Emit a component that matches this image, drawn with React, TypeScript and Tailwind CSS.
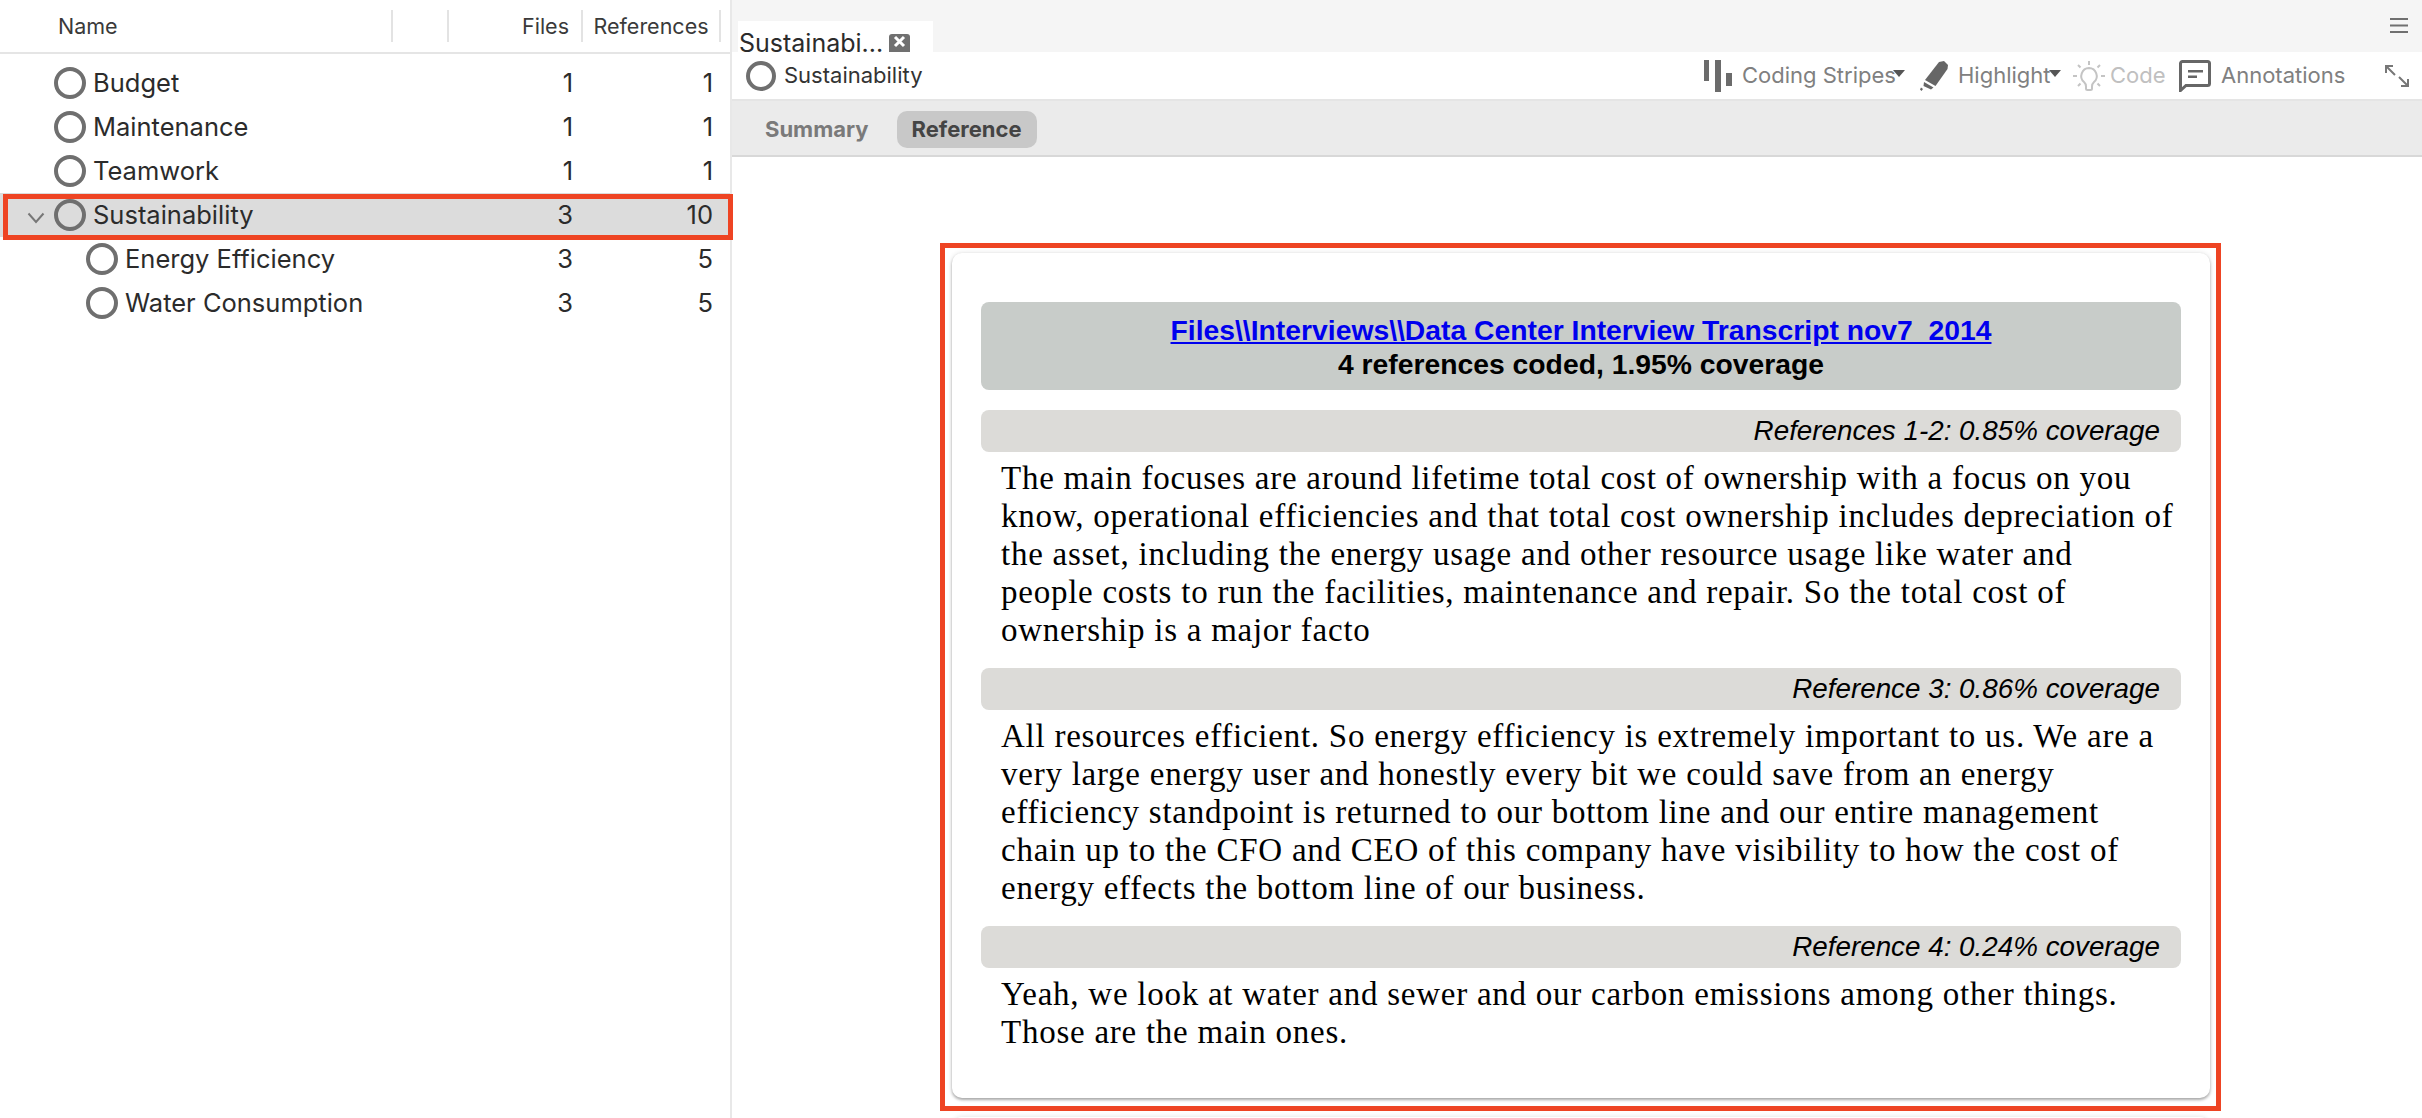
const ui = { fontFamily: "Inter, sans-serif" };

const rows = [
  { name: "Budget", files: 1, refs: 1, depth: 0 },
  { name: "Maintenance", files: 1, refs: 1, depth: 0 },
  { name: "Teamwork", files: 1, refs: 1, depth: 0 },
  { name: "Sustainability", files: 3, refs: 10, depth: 0, selected: true },
  { name: "Energy Efficiency", files: 3, refs: 5, depth: 1 },
  { name: "Water Consumption", files: 3, refs: 5, depth: 1 },
];

const sections = [
  {
    label: "References 1-2: 0.85% coverage",
    lines: [
      "The main focuses are around lifetime total cost of ownership with a focus on you",
      "know, operational efficiencies and that total cost ownership includes depreciation of",
      "the asset, including the energy usage and other resource usage like water and",
      "people costs to run the facilities, maintenance and repair. So the total cost of",
      "ownership is a major facto",
    ],
  },
  {
    label: "Reference 3: 0.86% coverage",
    lines: [
      "All resources efficient. So energy efficiency is extremely important to us. We are a",
      "very large energy user and honestly every bit we could save from an energy",
      "efficiency standpoint is returned to our bottom line and our entire management",
      "chain up to the CFO and CEO of this company have visibility to how the cost of",
      "energy effects the bottom line of our business.",
    ],
  },
  {
    label: "Reference 4: 0.24% coverage",
    lines: [
      "Yeah, we look at water and sewer and our carbon emissions among other things.",
      "Those are the main ones.",
    ],
  },
];

function Circle({ className }: { className?: string }) {
  return <span className={"block h-[32px] w-[32px] shrink-0 rounded-full border-[4px] border-[#6f6f6f] " + (className ?? "")} />;
}

function TreeRow({ row }: { row: (typeof rows)[number] }) {
  return (
    <div className={"relative flex h-[44px] items-center " + (row.selected ? "bg-[#dcdcdc]" : "")}>
      {row.selected && (
        <>
          {/* annotation box drawn over the row */}
          <div className="absolute left-[3px] top-[1px] h-[46px] w-[730px] border-[5px] border-[#ee4423]" />
          <svg className="absolute left-[27px] top-[19px]" width="18" height="12" viewBox="0 0 18 12">
            <path d="M1.5 1.5 9 10l7.5-8.5" fill="none" stroke="#777" strokeWidth="2" />
          </svg>
        </>
      )}
      <Circle className={row.depth ? "ml-[86px]" : "ml-[54px]"} />
      <span className="ml-[7px] flex-1 text-[25.5px] text-[#2b2b2b]">{row.name}</span>
      <span className="w-[60px] text-right text-[25.5px] text-[#2b2b2b]">{row.files}</span>
      <span className="ml-[80px] mr-[17px] w-[60px] text-right text-[25.5px] text-[#2b2b2b]">{row.refs}</span>
    </div>
  );
}

function Toolbar() {
  return (
    <div className="flex h-[47px] shrink-0 items-center bg-white pl-[14px] text-[22px] text-[#808080]">
      <Circle className="!h-[30px] !w-[30px]" />
      <span className="ml-[8px] flex-1 text-[#333]">Sustainability</span>

      <svg width="28" height="32" viewBox="0 0 28 32" className="mr-[10px]">
        <rect x="0" y="0" width="5" height="21" fill="#6b6b6b" />
        <rect x="11" y="0" width="6" height="32" fill="#6b6b6b" />
        <rect x="22" y="13" width="6" height="13" fill="#6b6b6b" />
      </svg>
      <span className="relative w-[164px] whitespace-nowrap">
        Coding Stripes
        <svg className="absolute left-[151px] top-[11px]" width="12" height="7" viewBox="0 0 12 7">
          <path d="M0 0h12L6 7z" fill="#555" />
        </svg>
      </span>

      <svg width="28" height="30" viewBox="0 0 28 30" className="ml-[14px] mr-[10px]">
        <path d="M24 0 28 4 27.500 8 15.500 25 5 19 19 1z" fill="#666" />
        <path d="M4 21 13.500 26.500 11 28.500 3.500 25z" fill="#666" />
        <path d="M1 26.500 3 28 1.500 30 0 28.500z" fill="#666" />
      </svg>
      <span className="relative w-[93px]">
        Highlight
        <svg className="absolute left-[91px] top-[11px]" width="12" height="7" viewBox="0 0 12 7">
          <path d="M0 0h12L6 7z" fill="#555" />
        </svg>
      </span>

      <svg width="32" height="30" viewBox="0 0 32 30" className="ml-[22px] mr-[5px]" fill="none" stroke="#c4c4c4" strokeWidth="2">
        <path d="M16 7a8 8 0 0 0-5 14c1.500 1.300 2 2.500 2 4.500v2a1.500 1.500 0 0 0 1.500 1.500h3a1.500 1.500 0 0 0 1.500-1.500v-2c0-2 .5-3.200 2-4.500a8 8 0 0 0-5-14z" />
        <path d="M16 0v4M5 4l2.500 2.500M27 4l-2.500 2.500M0 15h4M28 15h4M5 25l2.500-2.500M27 25l-2.500-2.500" />
      </svg>
      <span className="w-[53px] text-[#c0c0c0]">Code</span>

      <svg width="32" height="32" viewBox="0 0 32 32" className="ml-[16px] mr-[10px]">
        <path d="M3.500 1.500h25a2 2 0 0 1 2 2v20a2 2 0 0 1-2 2H7l-5.500 5V3.500a2 2 0 0 1 2-2z" fill="none" stroke="#666" strokeWidth="3" />
        <rect x="9" y="10" width="15" height="2.500" fill="#666" />
        <rect x="9" y="15.500" width="9" height="2.500" fill="#666" />
      </svg>
      <span className="w-[125px] whitespace-nowrap">Annotations</span>

      <svg width="24" height="22" viewBox="0 0 24 22" className="ml-[39px] mr-[13px]" fill="none" stroke="#777" strokeWidth="2">
        <path d="M1 8V1h7M1 1l9 9M23 14v7h-7M23 21l-9-9" />
      </svg>
    </div>
  );
}

export default function App() {
  return (
    <div className="flex h-[1118px] w-[2422px] overflow-hidden bg-white" style={ui}>
      {/* code tree */}
      <div className="w-[732px] shrink-0 border-r-2 border-[#e8e8e8]">
        <div className="flex h-[54px] items-center border-b-2 border-[#e5e5e5] text-[21.5px] text-[#3a3a3a]">
          <span className="ml-[58px] w-[333px]">Name</span>
          <span className="h-[32px] w-[56px] border-l-2 border-[#e3e3e3]" />
          <span className="flex h-[32px] w-[134px] items-center justify-end border-l-2 border-[#e3e3e3] pr-[12px]">Files</span>
          <span className="flex h-[32px] w-[140px] items-center justify-center whitespace-nowrap border-x-2 border-[#e3e3e3]">References</span>
        </div>
        <div className="pt-[7px]">
          {rows.map((r) => (
            <TreeRow key={r.name} row={r} />
          ))}
        </div>
      </div>

      {/* detail view */}
      <div className="flex min-w-0 flex-1 flex-col">
        <div className="flex h-[52px] shrink-0 items-end justify-between bg-[#f5f5f5] pl-[6px]">
          <div className="flex h-[31px] w-[195px] items-start bg-white pt-[13px] text-[25px] leading-[18px] text-[#2b2b2b]">
            <span className="ml-[1px]">Sustainabi...</span>
            <span className="ml-[6px] flex h-[18px] w-[21px] items-start justify-center rounded-t-[3px] bg-[#707070] pt-[1px]">
              <svg width="13" height="13" viewBox="0 0 13 13">
                <path d="M2 2l9 9M11 2l-9 9" stroke="#fff" strokeWidth="3" />
              </svg>
            </span>
          </div>
          <svg width="18" height="15" viewBox="0 0 18 15" className="mb-[19px] mr-[14px]">
            <path d="M0 1h18M0 7.500h18M0 14h18" stroke="#707070" strokeWidth="2" />
          </svg>
        </div>
        <Toolbar />
        <div className="flex h-[58px] shrink-0 items-center border-y-2 border-t-[#e5e5e5] border-b-[#d8d8d8] bg-[#ebebeb] pl-[33px] pt-[2px] text-[22px] font-bold">
          <span className="text-[#7a7a7a]">Summary</span>
          <span className="ml-[28px] rounded-[10px] bg-[#c8c8c8] px-[15px] py-[2px] text-[#444]">Reference</span>
        </div>

        <div className="min-h-0 flex-1 overflow-hidden pl-[208px] pt-[86px]">
          <div className="w-[1281px] border-[5px] border-[#ee4423] pb-[8px] pl-[7px] pt-[5px]">
            <div
              className="h-[845px] w-[1258px] rounded-[10px] bg-white px-[29px] pt-[49px] shadow-[0_2px_3px_rgba(0,0,0,0.3),0_0_5px_rgba(0,0,0,0.12)]"
              style={{ fontFamily: '"Liberation Sans", Arial, sans-serif' }}
            >
              <div className="mb-[20px] flex h-[88px] flex-col items-center justify-center rounded-[8px] bg-[#c8ccc9] pt-[1px] text-[28.3px] font-bold leading-[34px] text-black">
                <a className="text-[#0000ee] underline">{"Files\\\\Interviews\\\\Data Center Interview Transcript nov7_2014"}</a>
                <span>4 references coded, 1.95% coverage</span>
              </div>
              {sections.map((s) => (
                <div key={s.label} className="mb-[19px]">
                  <div className="flex h-[42px] items-center justify-end rounded-[8px] bg-[#dcdbd8] pr-[21px] text-[27.8px] italic text-black">
                    {s.label}
                  </div>
                  <div
                    className="pl-[20px] pt-[7px] text-[33px] leading-[38px] tracking-[0.75px] text-black"
                    style={{ fontFamily: '"Liberation Serif", serif' }}
                  >
                    {s.lines.map((l) => (
                      <div key={l} className="whitespace-nowrap">{l}</div>
                    ))}
                  </div>
                </div>
              ))}
            </div>
          </div>
          {/* top edge of the next card, just in view */}
          <div className="ml-[12px] mt-[6px] h-[10px] w-[1258px] rounded-t-[10px] bg-white shadow-[0_0_5px_rgba(0,0,0,0.12)]" />
        </div>
      </div>
    </div>
  );
}
